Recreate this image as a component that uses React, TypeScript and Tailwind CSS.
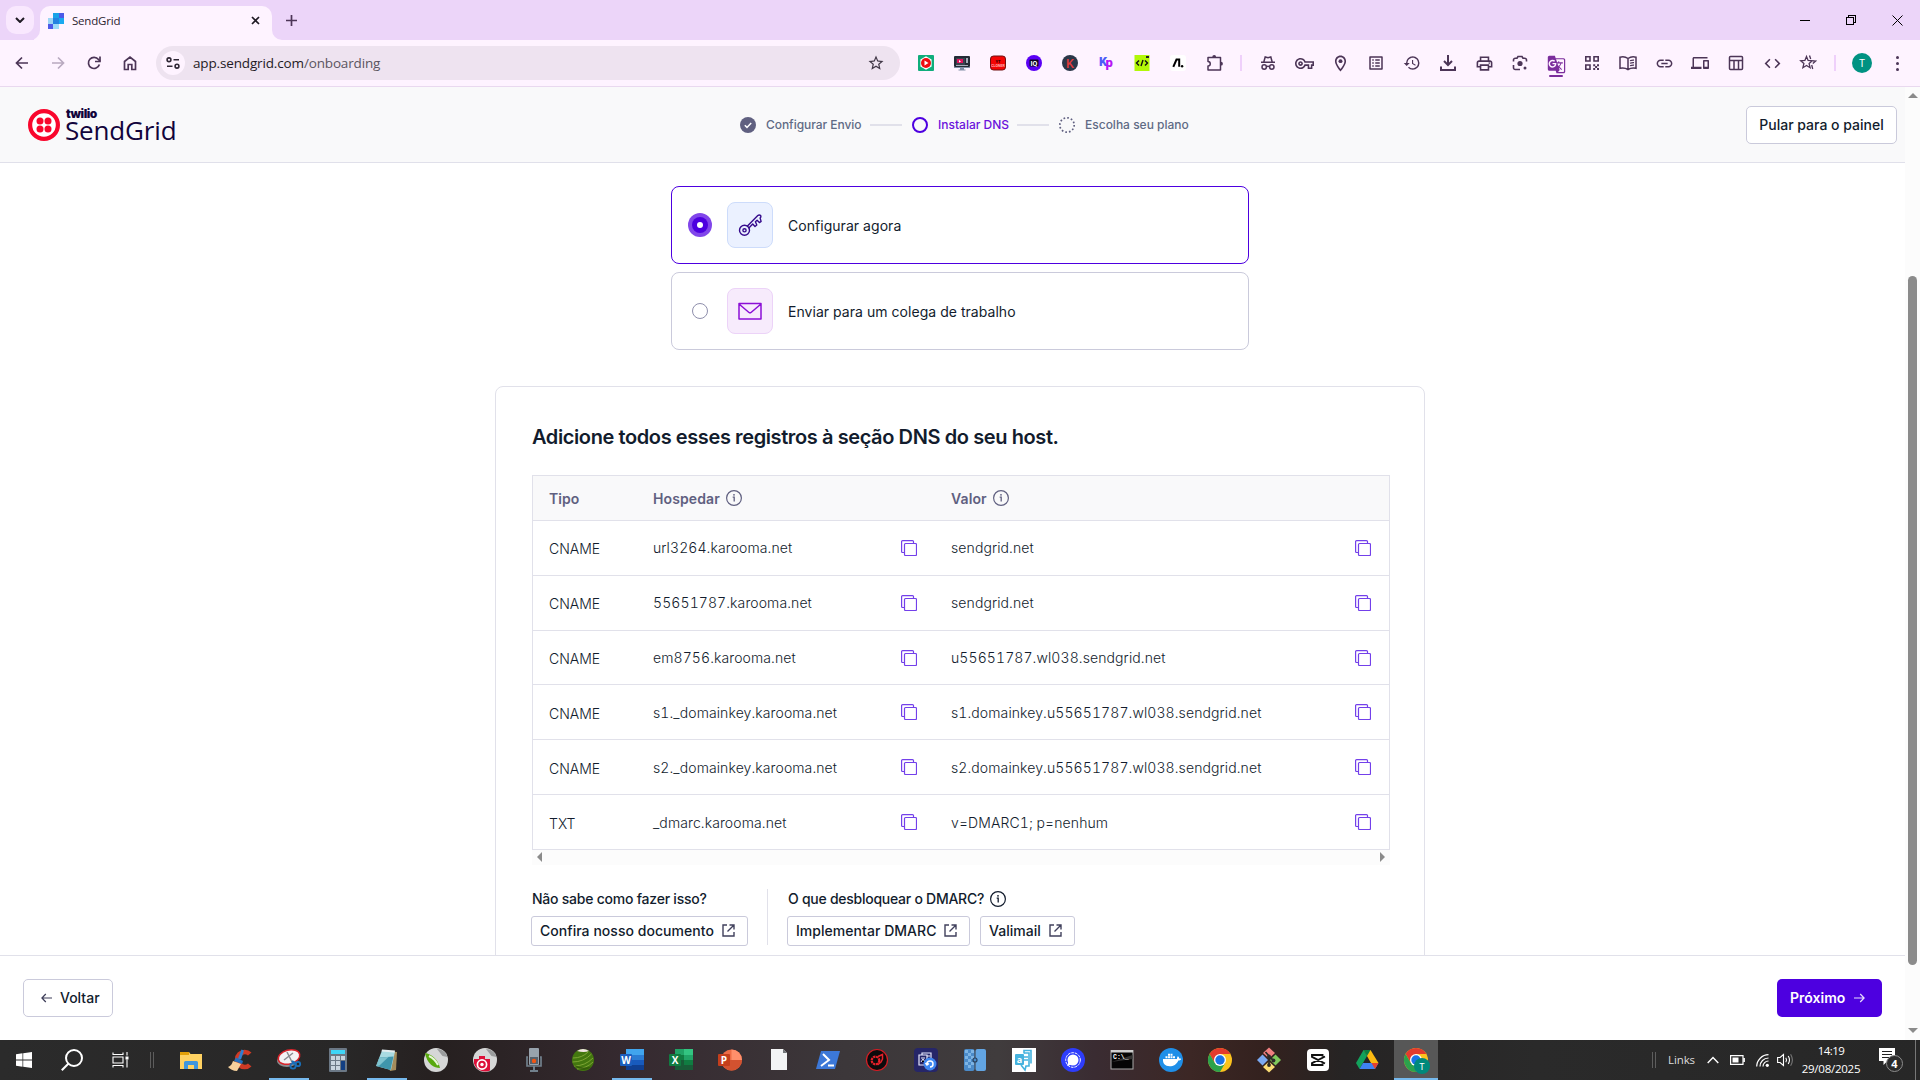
import React from "react";
import {
  MdOutlineVpnKey,
  MdOutlineLocationOn,
  MdOutlineListAlt,
  MdHistory,
  MdOutlinePrint,
  MdGTranslate,
  MdLink,
  MdDevices,
  MdCode,
  MdStarBorder,
} from "react-icons/md";

type Kids = { children?: React.ReactNode };

const inter = "font-['Inter',sans-serif]";

function Slot({ children }: Kids) {
  return <div className="flex h-9 w-9 shrink-0 items-center justify-center text-[#4c3557]">{children}</div>;
}

function TabStrip() {
  return (
    <div className="flex h-10 shrink-0 items-end justify-between bg-[#ecd5f9]">
      <div className="flex h-[34px] items-end">
        <div className="mb-[6px] ml-[6px] flex h-7 w-7 items-center justify-center rounded-[10px] bg-[#f9e8fe]">
          <svg width="10" height="6" viewBox="0 0 10 6" fill="none" stroke="#1f1a24" strokeWidth="2">
            <path d="M1 1l4 4 4-4" />
          </svg>
        </div>
        <svg width="6" height="10" viewBox="0 0 6 10" className="shrink-0">
          <path d="M6 0v10H-4A10 10 0 0 0 6 0z" fill="#fef3ff" />
        </svg>
        <div className="flex h-[34px] w-[232px] items-center rounded-t-[10px] bg-[#fef3ff] pb-[5px] pl-2 pr-[12px]">
          <svg width="16" height="16" viewBox="0 0 16 16" shapeRendering="crispEdges">
            <path d="M0 5.33h5.33v5.33H0z" fill="#9dd6f5" />
            <path d="M5.33 0h5.33v5.33H5.33z" fill="#1aa3e8" />
            <path d="M10.66 0H16v5.33h-5.34z" fill="#4c5ae8" />
            <path d="M5.33 5.33h5.33v5.33H5.33z" fill="#2583e0" />
            <path d="M10.66 5.33H16v5.33h-5.34z" fill="#1aa9f0" />
            <path d="M0 10.66h5.33V16H0z" fill="#4c5ae8" />
            <path d="M5.33 10.66h5.33V16H5.33z" fill="#9ddcf8" />
          </svg>
          <span className="ml-2 flex-1 font-['Open_Sans',sans-serif] text-[11.5px] leading-4 tracking-[-0.2px] text-[#2b2330]">
            SendGrid
          </span>
          <svg width="9" height="9" viewBox="0 0 9 9" stroke="#1f1a24" strokeWidth="1.7">
            <path d="M1 1l7 7M8 1L1 8" />
          </svg>
        </div>
        <svg width="10" height="10" viewBox="0 0 10 10" className="shrink-0">
          <path d="M0 0v10h10A10 10 0 0 1 0 0z" fill="#fef3ff" />
        </svg>
        <svg width="11" height="11" viewBox="0 0 11 11" className="mb-[14px] ml-1" stroke="#4c3557" strokeWidth="1.7">
          <path d="M5.5 0v11M0 5.5h11" />
        </svg>
      </div>
      <div className="flex h-10 items-center text-black">
        <div className="flex w-[46px] justify-center">
          <div className="h-px w-[10px] bg-black" />
        </div>
        <div className="flex w-[46px] justify-center">
          <svg width="10" height="10" viewBox="0 0 10 10" fill="none" stroke="#000" strokeWidth="1" shapeRendering="crispEdges">
            <path d="M.5 2.5h7v7h-7zM2.5 2.5v-2h7v7h-2" />
          </svg>
        </div>
        <div className="flex w-[46px] justify-center">
          <svg width="11" height="11" viewBox="0 0 11 11" stroke="#000" strokeWidth="1">
            <path d="M.5.5l10 10M10.5.5l-10 10" />
          </svg>
        </div>
      </div>
    </div>
  );
}

function Extensions() {
  return (
    <>
      <Slot>
        <svg width="16" height="16" viewBox="0 0 16 16">
          <rect width="16" height="16" rx="1" fill="#10ad7c" />
          <path d="M8 1.2l5.6 3.3v7L8 14.8l-5.600-3.300v-7z" fill="#fff" />
          <circle cx="8" cy="8" r="5" fill="#f00d12" />
          <path d="M6.500 5.500v5l4-2.500z" fill="#fff" />
        </svg>
      </Slot>
      <Slot>
        <svg width="16" height="16" viewBox="0 0 16 16">
          <rect x="0" y="1" width="16" height="11" rx="1" fill="#242a36" />
          <rect x="2" y="3" width="9" height="7" fill="#3a414f" />
          <path d="M3 4h6v4H3z" fill="#e0125c" />
          <path d="M12 3h2v5h-2zM2 10h12v1H2z" fill="#a5adba" />
          <path d="M0 12h16v1H0zM6 13h4v1.500H6zM4.500 14.500h7v1h-7z" fill="#8291a8" />
          <path d="M5 5l2 1.500-2 1z" fill="#fff" />
        </svg>
      </Slot>
      <Slot>
        <svg width="16" height="16" viewBox="0 0 16 16">
          <rect x=".5" y="1" width="15" height="14" rx="3" fill="#f40505" stroke="#6f1010" />
          <text x="8" y="7.500" fontSize="4" fontWeight="700" textAnchor="middle" fill="#220000" fontFamily="Roboto">YT</text>
          <text x="8" y="12" fontSize="3.600" fontWeight="700" textAnchor="middle" fill="#ffb0b0" fontFamily="Roboto">CLONER</text>
        </svg>
      </Slot>
      <Slot>
        <svg width="16" height="16" viewBox="0 0 16 16">
          <circle cx="8" cy="8" r="8" fill="#5a00f5" />
          <rect x="3.500" y="4.500" width="9" height="7" rx="1" fill="#0b0420" />
          <text x="8" y="10.500" fontSize="7" fontWeight="700" textAnchor="middle" fill="#fff" fontFamily="Roboto">IQ</text>
        </svg>
      </Slot>
      <Slot>
        <svg width="16" height="16" viewBox="0 0 16 16">
          <circle cx="8" cy="8" r="8" fill="#2b3648" />
          <text x="8" y="12.500" fontSize="12.500" textAnchor="middle" fill="#e23b3b" fontFamily="Roboto" fontWeight="500">K</text>
        </svg>
      </Slot>
      <Slot>
        <svg width="16" height="16" viewBox="0 0 16 16">
          <text x="1" y="11" fontSize="12.500" fontWeight="900" fill="#4d5cf8" fontFamily="Roboto">K</text>
          <text x="7.500" y="12" fontSize="13" fontWeight="900" fill="#b615f5" fontFamily="Roboto">p</text>
        </svg>
      </Slot>
      <Slot>
        <svg width="16" height="16" viewBox="0 0 16 16">
          <rect x=".5" width="15" height="16" fill="#b2f808" />
          <path d="M5 5.500L2.500 8 5 10.500M11 5.500L13.500 8 11 10.500M9 5l-2 6" stroke="#111" strokeWidth="1.400" fill="none" />
          <path d="M12 1h3v2h-3z" fill="#222" />
        </svg>
      </Slot>
      <Slot>
        <svg width="16" height="16" viewBox="0 0 16 16">
          <rect width="16" height="16" rx="3" fill="#fff" />
          <path d="M3.300 11.800L6.500 4.500h2.700v7.300" fill="none" stroke="#000" strokeWidth="2" />
          <circle cx="12.100" cy="11.300" r="1.200" fill="#000" />
        </svg>
      </Slot>
      <div className="flex h-9 w-9 items-center justify-center pl-[2px]">
        <svg width="18" height="18" viewBox="0 0 18 18" fill="none" stroke="#4c3557" strokeWidth="1.500">
          <path d="M2 3.500h12.500v12.500H2v-4a2.200 2.200 0 0 0 0-4.500z" strokeLinejoin="round" />
          <path d="M6.300 3a1.900 1.900 0 0 1 3.800 0zM15 7.800a1.900 1.900 0 0 1 0 3.800z" fill="#4c3557" stroke="none" />
        </svg>
      </div>
    </>
  );
}

function Actions() {
  return (
    <>
      <Slot>
        <svg width="16" height="16" viewBox="0 0 16 16" fill="none" stroke="#4c3557" strokeWidth="1.500">
          <path d="M1 7.300h14M3.800 7l1.400-5 2.800.8 2.800-.8 1.400 5" />
          <circle cx="4.200" cy="12" r="2.200" />
          <circle cx="11.800" cy="12" r="2.200" />
          <path d="M6.200 11.700q1.800-1 3.600 0" />
        </svg>
      </Slot>
      <Slot><MdOutlineVpnKey size={19} /></Slot>
      <Slot><MdOutlineLocationOn size={19} /></Slot>
      <Slot><MdOutlineListAlt size={18} /></Slot>
      <Slot><MdHistory size={18} /></Slot>
      <Slot>
        <svg width="16" height="16" viewBox="0 0 16 16" fill="none" stroke="#4c3557" strokeWidth="2">
          <path d="M8 0v9.500M4 6l4 4 4-4M1 11.500V15h14v-3.500" />
        </svg>
      </Slot>
      <Slot><MdOutlinePrint size={19} /></Slot>
      <Slot>
        <svg width="16" height="16" viewBox="0 0 16 16" fill="none" stroke="#4c3557" strokeWidth="1.600">
          <path d="M1.500 6.500V5A1.800 1.800 0 0 1 3.300 3.200H5L6 1.500h4l1 1.700h1.700A1.800 1.800 0 0 1 14.500 5v1.500M1.500 10v2.700a1.800 1.800 0 0 0 1.800 1.800H8" />
          <circle cx="8" cy="8.500" r="2.600" fill="#4c3557" stroke="none" />
          <circle cx="13" cy="13" r="1.500" fill="#4c3557" stroke="none" />
        </svg>
      </Slot>
      <div className="flex h-9 w-9 flex-col items-center justify-end text-[#7b2d9c]">
        <MdGTranslate size={19} />
        <div className="mb-1 mt-px h-[2px] w-[14px] rounded bg-[#7b2d9c]" />
      </div>
      <Slot>
        <svg width="16" height="16" viewBox="0 0 16 16" fill="none" stroke="#4c3557" strokeWidth="1.600">
          <path d="M1.800 1.800h4.200V6H1.800zM10 1.800h4.200V6H10zM1.800 10h4.200v4.200H1.800z" />
          <path
            d="M9.200 9.200h2v2h-2zM13 9.200h2v2h-2zM11.100 11.100h2v2h-2zM9.200 13h2v2h-2zM13 13h2v2h-2z"
            fill="#4c3557"
            stroke="none"
          />
        </svg>
      </Slot>
      <Slot>
        <svg width="18" height="16" viewBox="0 0 18 16" fill="none" stroke="#4c3557" strokeWidth="1.500">
          <path d="M9 3.500Q5.500 1 1 2.200v11q4.500-1 8 1.300 3.500-2.300 8-1.300v-11Q12.500 1 9 3.500zM9 3.500v11" />
          <path d="M11 5.800q2-.9 4-.7M11 8.300q2-.9 4-.7M11 10.800q2-.9 4-.7" strokeWidth="1.200" />
        </svg>
      </Slot>
      <Slot><MdLink size={19} /></Slot>
      <Slot><MdDevices size={18} /></Slot>
      <Slot>
        <svg width="16" height="16" viewBox="0 0 16 16" fill="none" stroke="#4c3557" strokeWidth="1.500">
          <rect x="1.500" y="1.500" width="13" height="13" rx="1" />
          <path d="M1.500 5.500h13M6 5.500v9M10.500 5.500v9" />
        </svg>
      </Slot>
      <Slot><MdCode size={19} /></Slot>
      <Slot>
        <svg width="18" height="18" viewBox="0 0 18 18" fill="none" stroke="#4c3557" strokeWidth="1.300">
          <path d="M7.500 2.500l1.600 4 4.200.3-3.200 2.800 1 4.100-3.600-2.200-3.600 2.200 1-4.100L1.700 6.800l4.200-.3z" />
          <path d="M10.500 1.500l1.200 3.500M14 6.800l2.800.2-3 2.600M12.700 11l1 4" />
        </svg>
      </Slot>
    </>
  );
}

function Toolbar() {
  return (
    <div className="flex h-[47px] shrink-0 items-center border-b border-[#e9d9ef] bg-[#fef3ff]">
      <div className="flex w-[156px] items-center gap-[18px] pl-[13px] text-[#4c3557]">
        <svg width="18" height="18" viewBox="0 0 18 18" fill="none" stroke="#4c3557" strokeWidth="1.700">
          <path d="M15 9H4M9 3.500L3.500 9 9 14.500" />
        </svg>
        <svg width="18" height="18" viewBox="0 0 18 18" fill="none" stroke="#b9a9c0" strokeWidth="1.700">
          <path d="M3 9h11M9 3.500L14.500 9 9 14.500" />
        </svg>
        <svg width="18" height="18" viewBox="0 0 18 18" fill="none" stroke="#4c3557" strokeWidth="1.700">
          <path d="M14.400 10.500A5.600 5.600 0 1 1 13.500 5.500L15 7.200" />
          <path d="M15 2.500v5h-5" />
        </svg>
        <svg width="18" height="18" viewBox="0 0 18 18" fill="none" stroke="#4c3557" strokeWidth="1.700">
          <path d="M3.500 7.500L9 3l5.500 4.500V15.500h-3.700v-5H7.200v5H3.500z" />
        </svg>
      </div>
      <div className="flex h-[34px] w-[744px] items-center rounded-full bg-[#eee3f0] pl-[5px] pr-[15px]">
        <div className="flex h-6 w-6 items-center justify-center rounded-full bg-[#fef3ff]">
          <svg width="14" height="12" viewBox="0 0 14 12" fill="none" stroke="#2f2835" strokeWidth="1.600">
            <circle cx="3" cy="2.800" r="1.900" />
            <path d="M7.500 2.800H13M1 9.200h5.500" />
            <circle cx="11" cy="9.200" r="1.900" />
          </svg>
        </div>
        <span className="ml-2 flex-1 font-['Open_Sans',sans-serif] text-[13.5px] leading-5 tracking-[-0.150px] text-[#1f1a24]">
          app.sendgrid.com<span className="text-[#5a5560]">/onboarding</span>
        </span>
        <MdStarBorder size={18} className="text-[#3f3645]" />
      </div>
      <div className="ml-2 flex w-[330px] items-center">
        <Extensions />
      </div>
      <div className="ml-[2px] h-4 w-[2px] bg-[#efd0fb]" />
      <div className="ml-2 flex items-center">
        <Actions />
      </div>
      <div className="ml-2 h-4 w-[2px] bg-[#efd0fb]" />
      <div className="ml-4 flex h-5 w-5 items-center justify-center rounded-full bg-[#009282] font-['Roboto',sans-serif] text-[10px] text-white">
        T
      </div>
      <div className="ml-6 flex flex-col gap-[3px]">
        <i className="h-[3px] w-[3px] rounded-full bg-[#4c3557]" />
        <i className="h-[3px] w-[3px] rounded-full bg-[#4c3557]" />
        <i className="h-[3px] w-[3px] rounded-full bg-[#4c3557]" />
      </div>
    </div>
  );
}

function Logo() {
  return (
    <div className="flex w-[240px] items-center pl-7">
      <svg width="32" height="32" viewBox="0 0 32 32">
        <circle cx="16" cy="16" r="13.900" fill="#fff" stroke="#f9062c" strokeWidth="4.200" />
        <g fill="#f9062c">
          <circle cx="12" cy="12" r="3.500" />
          <circle cx="20" cy="12" r="3.500" />
          <circle cx="12" cy="20" r="3.500" />
          <circle cx="20" cy="20" r="3.500" />
        </g>
      </svg>
      <div className="ml-[5px] flex flex-col text-[#12043c]">
        <span className="ml-px mt-[2px] font-['Inter',sans-serif] text-[12px] font-black leading-[9px] tracking-[-0.5px]">twilio</span>
        <span className="font-['Open_Sans',sans-serif] text-[26px] leading-6 tracking-[-0.15px]">SendGrid</span>
      </div>
    </div>
  );
}

function Header() {
  return (
    <header className="flex h-[76px] shrink-0 items-center border-b border-[#e0e0ea] bg-[#f9f9fa] pr-2">
      <Logo />
      <div className="ml-[500px] flex items-center text-[12px] font-medium leading-4 text-[#606b85]">
        <svg width="16" height="16" viewBox="0 0 16 16">
          <circle cx="8" cy="8" r="8" fill="#606080" />
          <path d="M4.800 8.200l2.200 2.200 4.200-4.500" fill="none" stroke="#fff" strokeWidth="1.500" />
        </svg>
        <span className="ml-[10px] w-[104px] tracking-[-0.050px]">Configurar Envio</span>
        <div className="h-[2px] w-8 bg-[#e1e1ea]" />
        <div className="ml-[10px] h-4 w-4 rounded-full border-2 border-[#4d00e0]" />
        <span className="ml-[10px] w-[79px] text-[#6b12dc]">Instalar DNS</span>
        <div className="h-[2px] w-8 bg-[#e1e1ea]" />
        <svg width="16" height="16" viewBox="0 0 16 16" className="ml-[10px]">
          <circle cx="8" cy="8" r="7.200" fill="none" stroke="#606080" strokeWidth="1.700" strokeDasharray="1.700 2.070" />
        </svg>
        <span className="ml-[10px] w-[104px]">Escolha seu plano</span>
      </div>
      <button className="ml-auto h-[38px] w-[151px] rounded-[5px] border border-[#cacadb] bg-white text-[14px] font-medium text-[#121c2d]">
        Pular para o painel
      </button>
    </header>
  );
}

function Options() {
  return (
    <div className="mx-auto mt-[23px] flex w-[578px] flex-col gap-2 text-[14px] text-[#121c2d]">
      <div className="flex h-[78px] items-center rounded-[8px] border border-[#4d00e0] pl-4">
        <div className="flex h-6 w-6 items-center justify-center rounded-full bg-[#8146ea]">
          <div className="flex h-4 w-4 items-center justify-center rounded-full bg-[#4d00e0]">
            <div className="h-[6px] w-[6px] rounded-full bg-white" />
          </div>
        </div>
        <div className="ml-[15px] flex h-[46px] w-[46px] items-center justify-center rounded-[8px] border border-[#cddcfb] bg-[#ebf1ff]">
          <svg width="24" height="24" viewBox="0 0 24 24" fill="none" stroke="#350a8c" strokeWidth="1.400" strokeLinejoin="round" strokeLinecap="round">
            <circle cx="6.500" cy="17.300" r="5" />
            <circle cx="6.500" cy="17.300" r="1.600" />
            <path d="M9.500 13L19.800 2.600q1.300-1.200 2.600-.3.900 1 .1 2.200l-.4.600 1 3.300-1.700 1.200-2.300-2.400-1.700 1.600 1.400 3.200-1.800 1.500-2.300-2.500-3.600 3.700" />
          </svg>
        </div>
        <span className="ml-[15px] tracking-[0.040px]">Configurar agora</span>
      </div>
      <div className="flex h-[78px] items-center rounded-[8px] border border-[#cacadb] pl-4">
        <div className="flex h-6 w-6 items-center justify-center">
          <div className="h-4 w-4 rounded-full border border-[#8f8fac]" />
        </div>
        <div className="ml-[15px] flex h-[46px] w-[46px] items-center justify-center rounded-[8px] border border-[#ecd3f8] bg-[#f7ebfc]">
          <svg width="24" height="18" viewBox="0 0 24 18" fill="none" stroke="#8c0fd6" strokeWidth="1.500" strokeLinejoin="round">
            <path d="M1 1.500h22v15.500H1zM1 2l10 8.500q1 .7 2 0L23 2" />
          </svg>
        </div>
        <span className="ml-[15px] tracking-[0.040px]">Enviar para um colega de trabalho</span>
      </div>
    </div>
  );
}

function Info({ color }: { color: string }) {
  return (
    <svg width="16" height="16" viewBox="0 0 16 16" fill="none" stroke={color}>
      <circle cx="8" cy="8" r="7.400" strokeWidth="1.200" />
      <path d="M6.700 7.200H8.200v4.300" strokeWidth="1.300" />
      <circle cx="8" cy="4.800" r=".9" fill={color} stroke="none" />
    </svg>
  );
}

function Copy() {
  return (
    <svg width="16" height="16" viewBox="0 0 16 16" fill="none" stroke="#7340ea" strokeWidth="1.200">
      <path d="M3.500 12.500H1.600A1 1 0 0 1 .6 11.500V1.600a1 1 0 0 1 1-1h9.900a1 1 0 0 1 1 1v1.600" />
      <rect x="3.500" y="3.500" width="12" height="12" rx="1" />
    </svg>
  );
}

const records = [
  ["CNAME", "url3264.karooma.net", "sendgrid.net"],
  ["CNAME", "55651787.karooma.net", "sendgrid.net"],
  ["CNAME", "em8756.karooma.net", "u55651787.wl038.sendgrid.net"],
  ["CNAME", "s1._domainkey.karooma.net", "s1.domainkey.u55651787.wl038.sendgrid.net"],
  ["CNAME", "s2._domainkey.karooma.net", "s2.domainkey.u55651787.wl038.sendgrid.net"],
  ["TXT", "_dmarc.karooma.net", "v=DMARC1; p=nenhum"],
];

function ExternalButton({ label, width }: { label: string; width: string }) {
  return (
    <button className={`flex h-[30px] items-center justify-between rounded-[3px] border border-[#cacadb] bg-white pl-2 pr-3 tracking-[0.040px] ${width}`}>
      {label}
      <svg width="13" height="13" viewBox="0 0 13 13" fill="none" stroke="#40405c" strokeWidth="1.400">
        <path d="M5 1H1v11h11V8M7.500 1H12v4.500M12 1L5.500 7.500" />
      </svg>
    </button>
  );
}

function DnsPanel() {
  return (
    <div className="mx-auto mt-[36px] h-[640px] w-[930px] rounded-[8px] border border-[#e1e1ea] pl-9 text-[14px] text-[#121c2d]">
      <h2 className="mt-[36px] text-[20px] font-semibold leading-7 tracking-[-0.4px]">
        Adicione todos esses registros à seção DNS do seu host.
      </h2>
      <div className="mt-[24px] w-[858px] border border-b-0 border-[#e1e1ea]">
        <div className="flex h-[45px] items-center border-b border-[#e1e1ea] bg-[#f9f9fa] font-semibold text-[#606080]">
          <div className="w-[120px] pl-4">Tipo</div>
          <div className="flex w-[298px] items-center gap-[6px] tracking-[0.1px]">
            Hospedar <Info color="#606080" />
          </div>
          <div className="flex items-center gap-[6px] tracking-[0.1px]">
            Valor <Info color="#606080" />
          </div>
        </div>
        {records.map(([type, host, value], i) => (
          <div key={i} className="flex h-[54.83px] items-center border-b border-[#e1e1ea] text-[#121c2d]">
            <div className="w-[120px] pl-4 pt-[2px] font-light">{type}</div>
            <div className="flex w-[298px] items-center justify-between pr-[34px]">
              <span className="font-light tabular-nums tracking-[0.1px]">{host}</span>
              <Copy />
            </div>
            <div className="flex flex-1 items-center justify-between pr-[18px]">
              <span className="font-light tabular-nums tracking-[0.1px]">{value}</span>
              <Copy />
            </div>
          </div>
        ))}
      </div>
      <div className="flex h-[15px] w-[858px] items-center justify-between bg-[#fcfcfc] px-[5px]">
        <div className="h-0 w-0 border-y-[5px] border-r-[5px] border-y-transparent border-r-[#8b8b8b]" />
        <div className="h-0 w-0 border-y-[5px] border-l-[5px] border-y-transparent border-l-[#8b8b8b]" />
      </div>
      <div className="mt-[24px] flex h-[56px] font-medium">
        <div className="flex w-[236px] flex-col border-r border-[#e1e1ea]">
          <div className="mb-[7px] flex h-5 items-center tracking-[-0.230px]">Não sabe como fazer isso?</div>
          <div className="-ml-px">
            <ExternalButton label="Confira nosso documento" width="w-[217px]" />
          </div>
        </div>
        <div className="flex flex-col pl-[19px]">
          <div className="mb-[7px] flex h-5 items-center gap-[6px] pl-px tracking-[-0.260px]">
            O que desbloquear o DMARC? <Info color="#121c2d" />
          </div>
          <div className="flex gap-[10px]">
            <ExternalButton label="Implementar DMARC" width="w-[183px]" />
            <ExternalButton label="Valimail" width="w-[95px]" />
          </div>
        </div>
      </div>
    </div>
  );
}

function FooterBar() {
  return (
    <div className="flex h-[85px] shrink-0 items-center justify-between border-t border-[#e1e1ea] bg-white pl-[23px] pr-[23px] text-[14px]">
      <button className="flex h-[38px] w-[90px] items-center rounded-[5px] border border-[#cacadb] pb-px pl-[17px] font-medium text-[#121c2d]">
        <svg width="11" height="10" viewBox="0 0 11 10" fill="none" stroke="#3c3c58" strokeWidth="1.200">
          <path d="M11 5H1M4.800 1L.9 5l3.900 4" />
        </svg>
        <span className="ml-2">Voltar</span>
      </button>
      <button className="flex h-[38px] w-[105px] items-center rounded-[5px] bg-[#4d00e0] pb-px pl-[13px] font-semibold text-white">
        Próximo
        <svg width="11" height="10" viewBox="0 0 11 10" fill="none" stroke="#e8defc" strokeWidth="1.200" className="ml-[9px]">
          <path d="M0 5h10M6.200 1l3.900 4-3.900 4" />
        </svg>
      </button>
    </div>
  );
}

function Page() {
  return (
    <div className={`flex min-h-0 flex-1 ${inter}`}>
      <div className="flex min-w-0 flex-1 flex-col bg-white">
        <Header />
        <main className="min-h-0 w-full flex-1 overflow-hidden pl-[15px]">
          <Options />
          <DnsPanel />
        </main>
        <FooterBar />
      </div>
      <div className="flex w-[15px] flex-col items-center bg-[#fcfcfc]">
        <div className="mt-[6px] h-0 w-0 border-x-[5px] border-b-[5px] border-x-transparent border-b-[#8b8b8b]" />
        <div className="mt-[178px] h-[689px] w-[9px] rounded-full bg-[#8b8b8b]" />
        <div className="mt-[63px] h-0 w-0 border-x-[5px] border-t-[5px] border-x-transparent border-t-[#8b8b8b]" />
      </div>
    </div>
  );
}

function ChromeMark() {
  return (
    <>
      <circle cx="12" cy="12" r="12" fill="#fcc31e" />
      <path d="M1.600 6A12 12 0 0 1 22.400 6H12L6.800 15z" fill="#e33b2e" />
      <path d="M1.600 6A12 12 0 0 0 12 24l5.200-9H6.800z" fill="#2ba24c" />
      <circle cx="12" cy="12" r="6" fill="#fff" />
      <circle cx="12" cy="12" r="4.700" fill="#1a73e8" />
    </>
  );
}

function OfficeMark({ letter, badge }: { letter: string; badge: string }) {
  return (
    <>
      <rect x="0" y="6" width="12" height="12" rx="1" fill={badge} />
      <text x="6" y="15.500" fontSize="10" fontWeight="700" textAnchor="middle" fill="#fff" fontFamily="Open Sans">{letter}</text>
    </>
  );
}

const apps: { art: React.ReactNode; open?: boolean; active?: boolean }[] = [
  {
    art: (
      <>
        <path d="M1 4h9l1.500 2H23v15H1z" fill="#ffd262" />
        <path d="M1 4h9v3H1z" fill="#e3a008" />
        <path d="M5 21v-6.500q0-1.500 1.500-1.500h11q1.500 0 1.500 1.500V21h-4v-4H9v4z" fill="#3f96dc" />
      </>
    ),
  },
  {
    art: (
      <>
        <path d="M23.500 4.500A9.800 9.800 0 1 0 23.500 18.500l-3.500-3a5 5 0 1 1 0-8z" fill="#d03a25" />
        <path d="M13.500 1.500l2.500 1-3 9-3-1z" fill="#2f7fd0" />
        <path d="M8 9.500l7 3.500-1 3-8-3z" fill="#2370bd" />
        <path d="M5 13l8 3-4 7c-4 0-7-2-9-4 3-1 4-3 5-6z" fill="#f5d09c" />
      </>
    ),
  },
  {
    open: true,
    art: (
      <>
        <ellipse cx="10" cy="13" rx="10" ry="6" fill="#8d8d90" />
        <ellipse cx="12" cy="9" rx="11" ry="7" transform="rotate(-15 12 9)" fill="#f3f3f4" stroke="#d8232a" strokeWidth="1.500" />
        <path d="M7 12l9-7M10 4l5 10" stroke="#8b8b90" strokeWidth="1.500" />
        <circle cx="16" cy="18" r="2.600" fill="none" stroke="#1a6fb8" strokeWidth="1.800" />
        <circle cx="21" cy="16" r="2.200" fill="none" stroke="#1a6fb8" strokeWidth="1.800" />
        <path d="M17 16l-2-3M19 15l-4-2" stroke="#1a6fb8" strokeWidth="1.800" />
      </>
    ),
  },
  {
    art: (
      <>
        <rect x="3" y="0" width="18" height="24" rx="1" fill="#6b7885" />
        <rect x="5" y="2" width="14" height="4" fill="#3fd5f7" />
        <path d="M5 8h4v4H5zM10 8h4v4h-4zM15 8h4v4h-4zM5 13h4v4H5zM10 13h4v4h-4zM5 18h4v4H5zM10 18h4v4h-4z" fill="#c9d4de" />
        <path d="M15 13h4v9h-4z" fill="#123f82" />
      </>
    ),
  },
  {
    open: true,
    art: (
      <>
        <path d="M9 3l13 1-1 18-6 1z" fill="#a48c5c" />
        <path d="M7 2.500l13 1-4 18.500-15-4z" fill="#a9dbe2" />
        <path d="M4.500 9.500l14-1-3 13.500-14-4z" fill="#3f96ac" />
        <path d="M4.500 9.500l9-.6-9 8.600-3 .5z" fill="#7fc3cf" />
        <path d="M7 1.500l13 1-.5 2-13-1z" fill="#e5eef0" />
      </>
    ),
  },
  {
    art: (
      <>
        <circle cx="12" cy="12" r="12" fill="#d6d7d7" />
        <path d="M13 1c5 0 9 3 10.500 8l-5-1z" fill="#9a9c9d" />
        <path d="M1 5c6 1 13 6 15 15-6 0-13-4-15-15z" fill="#58a90e" />
        <path d="M5 8c4 2 7 5 9 9" stroke="#e8f6d8" strokeWidth="2" fill="none" />
      </>
    ),
  },
  {
    art: (
      <>
        <circle cx="12" cy="12" r="12" fill="#d6d7d7" />
        <path d="M13 1c5 0 9 3 10.500 8l-5-1z" fill="#9a9c9d" />
        <path d="M1 11h5V8h6v3h5v11.500a12 12 0 0 1-16-7z" fill="#dd1039" />
        <circle cx="9" cy="16.500" r="4.600" fill="#dd1039" stroke="#fff" strokeWidth="1.700" />
        <circle cx="9" cy="16.500" r="1.700" fill="#fff" />
      </>
    ),
  },
  {
    art: (
      <>
        <rect x="7" y="0" width="10" height="17" rx="1" fill="#98a3ad" />
        <path d="M6 9H5v9h14V9h-1" fill="none" stroke="#71808c" strokeWidth="1.700" />
        <path d="M8 9h8v7H8z" fill="#55616c" />
        <circle cx="12" cy="13" r="2.200" fill="#f05513" />
        <path d="M11 18h2v4h3v2H8v-2h3z" fill="#71808c" />
      </>
    ),
  },
  {
    art: (
      <>
        <circle cx="12" cy="12" r="11" fill="#43770f" />
        <path d="M6 3q6-4 12 0-5 2-12 0z" fill="#f2e5e3" />
        <path d="M2 10q9 0 15-6M1.500 14q11 0 19-8M3 18q11 0 19-8M6 21q10-1 16-7" stroke="#7da534" strokeWidth="1" fill="none" />
        <path d="M2.500 16.500q8 4.500 18 2-8 8-18-2z" fill="#294b07" fillOpacity=".6" />
      </>
    ),
  },
  {
    open: true,
    art: (
      <>
        <path d="M6 1h18v6H6z" fill="#41a5ee" />
        <path d="M6 7h18v5H6z" fill="#2b7cd3" />
        <path d="M6 12h18v5H6z" fill="#185abd" />
        <path d="M6 17h18v5H6z" fill="#103f91" />
        <OfficeMark letter="W" badge="#1b5ebe" />
      </>
    ),
  },
  {
    art: (
      <>
        <path d="M6 1h9v6H6z" fill="#21a366" />
        <path d="M15 1h9v6h-9z" fill="#33c481" />
        <path d="M6 7h9v5H6z" fill="#107c41" />
        <path d="M15 7h9v5h-9z" fill="#21a366" />
        <path d="M6 12h18v10H6z" fill="#185c37" />
        <path d="M15 12h9v5h-9z" fill="#107c41" />
        <OfficeMark letter="X" badge="#107c41" />
      </>
    ),
  },
  {
    art: (
      <>
        <circle cx="13.500" cy="12" r="10.500" fill="#ed6c47" />
        <path d="M13.500 1.500A10.500 10.500 0 0 1 24 12H13.500z" fill="#ff8f6b" />
        <path d="M3 12h21a10.500 10.500 0 0 1-21 0z" fill="#d35230" />
        <OfficeMark letter="P" badge="#c43e1c" />
      </>
    ),
  },
  {
    art: (
      <>
        <path d="M4 1h12l4 4v17H4z" fill="#f3f4f5" />
        <path d="M16 1v4h4z" fill="#74787b" />
      </>
    ),
  },
  {
    art: (
      <>
        <path d="M5 3h19l-5 18H0z" fill="#3c78d8" />
        <path d="M7 6l6 6-8 6M12 17.500h6" stroke="#fff" strokeWidth="2" fill="none" />
      </>
    ),
  },
  {
    art: (
      <>
        <circle cx="12" cy="12" r="10.500" fill="#0d0b0c" stroke="#d51d24" strokeWidth="1.200" />
        <circle cx="10.500" cy="12.500" r="3.800" fill="none" stroke="#e52129" strokeWidth="2.200" strokeDasharray="2.400 .6" />
        <path d="M13 8.500l4.500-2v4.500l-1.500 3-3.500 3" stroke="#e52129" strokeWidth="1.500" fill="none" />
      </>
    ),
  },
  {
    art: (
      <>
        <rect width="24" height="24" rx="4" fill="#262668" />
        <path d="M5 7h8v10H5zM8 7V5h9v8" fill="none" stroke="#e8e9ff" strokeWidth="1.200" />
        <path d="M7 10h4M7 14l2-3 2 3M13 8h3" stroke="#e8e9ff" />
        <circle cx="16" cy="16" r="6.500" fill="#3e86ef" />
        <path d="M13 16a3 3 0 1 1 3 3M11.500 15l1.500 2 2-1.500" stroke="#fff" strokeWidth="1.500" fill="none" />
      </>
    ),
  },
  {
    art: (
      <>
        <rect x="1" y="1" width="10.500" height="22" rx="2" fill="#4b8bc9" />
        <path d="M2 2h3v3H2zM8 2h3v3H8zM5 5h3v3H5zM2 8h3v3H2zM8 8h3v3H8zM5 11h3v3H5zM2 14h3v3H2zM8 14h3v3H8zM5 17h3v3H5z" fill="#7db4e4" />
        <rect x="12.500" y="1" width="10.500" height="22" rx="2" fill="#62a5e3" />
        <circle cx="12" cy="12" r="2" fill="#4b8bc9" stroke="#27415e" strokeWidth="1.200" />
      </>
    ),
  },
  {
    art: (
      <>
        <rect width="24" height="24" fill="#fff" />
        <path d="M12 5.500V2.500h7v13" fill="none" stroke="#45b2de" strokeWidth="1.600" />
        <path d="M12 5h5v13h-3l-1 4-4-5" fill="none" stroke="#45b2de" strokeWidth="1.600" />
        <rect x="3" y="6" width="9" height="11" rx="1" fill="#45b2de" />
        <text x="7.500" y="14.500" fontSize="9" fontWeight="700" textAnchor="middle" fill="#fff" fontFamily="Open Sans">a</text>
        <path d="M12 9h4M12 12h4" stroke="#45b2de" strokeWidth="1.300" />
      </>
    ),
  },
  {
    art: (
      <>
        <circle cx="12" cy="12" r="12" fill="#2e3dfb" />
        <circle cx="12" cy="12" r="7.300" fill="none" stroke="#fff" strokeWidth="1" strokeDasharray="2.800 .8" />
        <circle cx="12" cy="12" r="5.500" fill="#fff" />
        <path d="M7.500 13.500L6 18l4.500-1.500z" fill="#fff" />
      </>
    ),
  },
  {
    art: (
      <>
        <rect x="1" y="2.500" width="22" height="18.500" fill="#050505" stroke="#aaa" strokeWidth="1" />
        <path d="M1 2h22v2.500H1z" fill="#cfcfcf" />
        <path d="M1.500 14L22.500 7v4z" fill="#333" />
        <text x="3" y="11" fontSize="6.500" fontWeight="700" fill="#fff" fontFamily="Liberation Mono">C:\_</text>
      </>
    ),
  },
  {
    art: (
      <>
        <circle cx="12" cy="12" r="12" fill="#1f8fe8" />
        <path d="M4 11h14c0-1 .2-2 .9-2.700 1 .7 1.300 1.500 1.300 2.300.8-.1 1.500 0 2 .3-.6 1.300-1.700 1.500-2.900 1.500-1.600 4-4.800 5.800-8.600 5.800C6 18.200 3.600 15.500 4 11z" fill="#fff" />
        <path d="M6.500 8.300h2v2h-2zM9 8.300h2v2H9zM11.500 8.300h2v2h-2zM14 8.300h2v2h-2zM9 5.800h2v2H9zM11.500 5.800h2v2h-2z" fill="#fff" />
      </>
    ),
  },
  { art: <ChromeMark /> },
  {
    art: (
      <>
        <path d="M12-.5l6 5.500-6 5.500L6 5z" fill="#f07f80" />
        <path d="M5.500 6.500L11 12l-5.500 5.500L0 12z" fill="#7ba9f2" />
        <path d="M18.500 6.500L24 12l-5.500 5.500L13 12z" fill="#80c95c" />
        <path d="M12 13.500l6 5.500-6 5.500L6 19z" fill="#fadc75" />
        <path d="M8.500 4l3.500 4v9.500M12 8.500l4.500 4" stroke="#2c2a28" strokeWidth="1.800" fill="none" />
        <circle cx="12" cy="8.500" r="1.900" fill="#2c2a28" />
        <circle cx="12" cy="17" r="1.900" fill="#2c2a28" />
        <circle cx="16.500" cy="12.500" r="1.900" fill="#2c2a28" />
      </>
    ),
  },
  {
    art: (
      <>
        <rect x="1" y="1" width="22" height="22" rx="4" fill="#fff" />
        <path d="M16.500 8.500v-1.500H6v1.800l13 6.700M16.500 15.500V17H6v-1.800l13-6.700" fill="none" stroke="#111" strokeWidth="1.900" />
      </>
    ),
  },
  {
    art: (
      <>
        <path d="M8.500 2h7l8 13h-7.500z" fill="#fcbb12" />
        <path d="M8.500 2L12 8 4.500 21 1 15z" fill="#12a25c" />
        <path d="M8 15h15.500L20 21H4.500z" fill="#3f82f1" />
        <path d="M16.500 15h7L20 21z" fill="#e5422f" />
        <path d="M8.500 2h7L12 8z" fill="#0a8043" />
      </>
    ),
  },
  {
    active: true,
    art: (
      <>
        <ChromeMark />
        <circle cx="18" cy="18" r="8" fill="#00897b" />
        <text x="18" y="21.500" fontSize="9" textAnchor="middle" fill="#fff" fontFamily="Roboto">T</text>
      </>
    ),
  },
];

function Taskbar() {
  return (
    <div className="flex h-10 shrink-0 items-stretch bg-[linear-gradient(90deg,#2b2b2b_0%,#282727_18%,#262020_23%,#362a30_33%,#3c373a_44%,#403c3d_52%,#3a2c32_57%,#3c2725_62%,#33211e_66%,#262424_70%,#2a2a2a_80%,#272727_100%)]">
      <div className="flex w-[144px] items-center">
        <div className="flex w-12 justify-center">
          <svg width="16" height="16" viewBox="0 0 16 16" fill="#fff">
            <path d="M0 2.200l6.500-.9v6.300H0zM7.200 1.200L16 0v7.600H7.200zM0 8.400h6.500v6.300L0 13.800zM7.200 8.400H16V16l-8.800-1.200z" />
          </svg>
        </div>
        <div className="flex w-12 justify-center">
          <svg width="22" height="22" viewBox="0 0 22 22" fill="none" stroke="#fff" strokeWidth="2">
            <circle cx="13" cy="9" r="8" />
            <path d="M7.500 14.500L.8 21.200" />
          </svg>
        </div>
        <div className="flex w-12 justify-center">
          <svg width="17" height="16" viewBox="0 0 17 16" fill="none" stroke="#fff" strokeWidth="1.100">
            <path d="M1 .5v2h10v-2M1 5h10v6H1zM1 15.500v-2h10v2M15 0v3.500M15 7.500V15.500" />
            <path d="M13.500 4.500h3v3h-3z" fill="#fff" stroke="none" />
          </svg>
        </div>
      </div>
      <div className="my-3 ml-[6px] w-[4px] border-x border-[#5d5d5d]" />
      <div className="ml-[12px] flex">
        {apps.map((app, i) => (
          <div key={i} className="flex w-[49px] justify-center">
            <div
              className={
                app.active
                  ? "flex w-[44px] items-center justify-center border-b-2 border-[#76b9ed] bg-[#575757] pt-[2px]"
                  : app.open
                    ? "flex w-10 items-center justify-center border-b-2 border-[#76b9ed] pt-[2px]"
                    : "flex w-10 items-center justify-center"
              }
            >
              <svg width="24" height="24" viewBox="0 0 24 24" overflow="visible">
                {app.art}
              </svg>
            </div>
          </div>
        ))}
      </div>
      <div className="ml-auto flex items-center font-['Open_Sans',sans-serif] text-[12px] leading-[18px] text-white">
        <div className="h-4 w-[4px] border-x border-[#5d5d5d]" />
        <span className="ml-[12px] w-[28px] text-[11.5px] tracking-[-0.1px] text-[#dcdcdc]">Links</span>
        <svg width="12" height="8" viewBox="0 0 12 8" fill="none" stroke="#fff" strokeWidth="1.400" className="ml-[11px]">
          <path d="M.7 7L6 1.500 11.300 7" />
        </svg>
        <svg width="15" height="10" viewBox="0 0 15 10" fill="none" stroke="#fff" strokeWidth="1.200" className="ml-[11px]">
          <path d="M.6.600h12.400v8.800H.6zM14.300 3v4" />
          <path d="M2.500 2.500h6v5h-6z" fill="#fff" stroke="none" />
        </svg>
        <svg width="13" height="13" viewBox="0 0 13 13" fill="none" stroke="#fff" strokeWidth="1.200" className="ml-[11px]">
          <path d="M.7 12.500A12 12 0 0 1 12.500.7M4 12.500A8.500 8.500 0 0 1 12.500 4M7 12.500A5.500 5.500 0 0 1 12.500 7" />
          <circle cx="11.300" cy="11.300" r="1.600" fill="#fff" stroke="none" />
        </svg>
        <svg width="17" height="14" viewBox="0 0 17 14" fill="none" stroke="#fff" strokeWidth="1.100" className="ml-2">
          <path d="M.6 4.500h2.500L6.500 1.500v11L3.100 9.500H.6z" />
          <path d="M8.800 4.800q1.500 2.200 0 4.400M11.200 3q2.600 4 0 8" />
          <path d="M13.600 1.200q3.600 5.800 0 11.600" stroke="#777" />
        </svg>
        <div className="ml-[6px] w-[62px] whitespace-nowrap text-center text-[11.500px] tracking-[-0.250px]">
          <div className="tracking-[-0.6px]">14:19</div>
          <div>29/08/2025</div>
        </div>
        <div className="ml-[17px]">
          <svg width="26" height="26" viewBox="0 0 26 26">
            <path d="M0 1h16v13H8.500L4.500 18v-4H0z" fill="#fff" />
            <path d="M3 4.500h10M3 7.500h10M3 10.500h7" stroke="#222" strokeWidth="1.200" />
            <circle cx="15.500" cy="16.500" r="8" fill="#2b2b2b" stroke="#8d8d8d" />
            <text x="15.500" y="20.500" fontSize="11" fontWeight="700" textAnchor="middle" fill="#fff" fontFamily="Open Sans">4</text>
          </svg>
        </div>
        <div className="ml-[10px] mr-1 h-10 w-px bg-[#777]" />
      </div>
    </div>
  );
}

export default function App() {
  return (
    <div className="flex h-[1080px] w-[1920px] flex-col overflow-hidden bg-white">
      <TabStrip />
      <Toolbar />
      <Page />
      <Taskbar />
    </div>
  );
}
